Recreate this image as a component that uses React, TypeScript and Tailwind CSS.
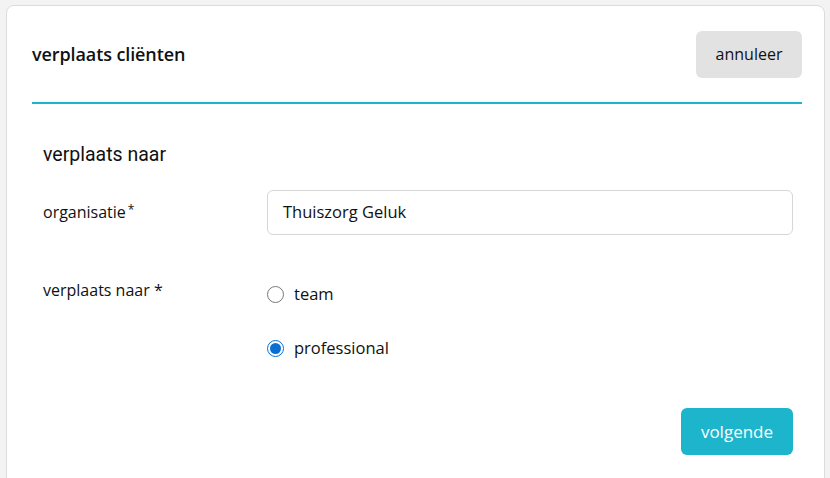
import React from "react";

export default function App() {
  const font = { fontFamily: '"Open Sans", "Noto Sans", sans-serif' };
  return (
    <div className="w-[830px] h-[478px] bg-[#f3f3f3] overflow-hidden pt-[5px] pl-[6px]" style={font}>
      <div className="w-[819px] h-[500px] bg-white border border-[#dcdcdc] rounded-[8px]">
        <div className="ml-[25px] mr-[22px] flex items-center justify-between h-[98px] pt-[0px] border-b-2 border-[#1cb5cc]">
          <div className="text-[18px] font-semibold text-[#111] tracking-[-0.1px]">verplaats cliënten</div>
          <button className="h-[47px] w-[106px] rounded-[6px] bg-[#e2e2e2] text-[16px] text-[#111]">annuleer</button>
        </div>
        <div className="pl-[36px] pr-[31px]">
          <div className="mt-[36px] text-[19.5px] text-[#111]" style={{ fontFamily: 'Roboto, sans-serif' }}>verplaats naar</div>
          <div className="flex mt-[21px]">
            <div className="w-[224px] pt-[10px] text-[16px] text-[#111]">
              organisatie<sup className="text-[12px] relative top-[-4px] ml-[2px]">*</sup>
            </div>
            <div className="h-[45px] w-[526px] border border-[#d6d6d6] rounded-[6px] flex items-center px-[15px] text-[16.5px] text-[#111]">
              Thuiszorg Geluk
            </div>
          </div>
          <div className="flex mt-[43px]">
            <div className="w-[224px] text-[16px] text-[#111] pt-[0px]">verplaats naar *</div>
            <div className="flex flex-col gap-[34px] pt-[6px]">
              <label className="flex items-center gap-[10px] text-[16.5px] text-[#111] h-[20px]">
                <span className="w-[17px] h-[17px] rounded-full border border-[#777] bg-white"></span>
                team
              </label>
              <label className="flex items-center gap-[10px] text-[16.5px] text-[#111] h-[20px]">
                <span className="w-[17px] h-[17px] rounded-full border-[1px] border-[#0a6fd1] bg-white flex items-center justify-center">
                  <span className="w-[11px] h-[11px] rounded-full bg-[#0a6fd1]"></span>
                </span>
                professional
              </label>
            </div>
          </div>
          <div className="flex justify-end pr-[0px] mt-[50px]">
            <button className="h-[47px] w-[112px] rounded-[6px] bg-[#1cb5cc] text-white text-[17px]">volgende</button>
          </div>
        </div>
      </div>
    </div>
  );
}
